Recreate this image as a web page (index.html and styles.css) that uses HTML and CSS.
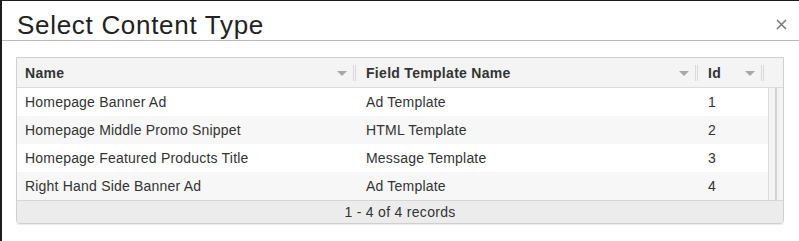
FILE: index.html
```html
<!DOCTYPE html>
<html lang="en">
<head>
    <meta charset="UTF-8">
    <title>Select Content Type</title>
    <link rel="stylesheet" href="styles.css">
</head>
<body>

    <div class="modal">
        <!-- Title bar -->
        <div class="modal-header">
            <h1>Select Content Type</h1>
            <button class="close" title="Close">
                <svg width="11" height="11" viewBox="0 0 11 11"><path d="M1 1 L10 10 M10 1 L1 10" stroke="#7a7a7a" stroke-width="1.6" fill="none"/></svg>
            </button>
        </div>

        <div class="modal-body">
            <div class="grid">
                <div class="grid-head">
                    <div class="th col-name"><span>Name</span><i class="arrow"></i><i class="sep"></i></div>
                    <div class="th col-tpl"><span>Field Template Name</span><i class="arrow"></i><i class="sep"></i></div>
                    <div class="th col-id"><span>Id</span><i class="arrow"></i><i class="sep"></i></div>
                </div>
                <div class="grid-content">
                    <div class="rows">
                        <div class="row">
                            <div class="td col-name">Homepage Banner Ad</div>
                            <div class="td col-tpl">Ad Template</div>
                            <div class="td col-id">1</div>
                        </div>
                        <div class="row alt">
                            <div class="td col-name">Homepage Middle Promo Snippet</div>
                            <div class="td col-tpl">HTML Template</div>
                            <div class="td col-id">2</div>
                        </div>
                        <div class="row">
                            <div class="td col-name">Homepage Featured Products Title</div>
                            <div class="td col-tpl">Message Template</div>
                            <div class="td col-id">3</div>
                        </div>
                        <div class="row alt">
                            <div class="td col-name">Right Hand Side Banner Ad</div>
                            <div class="td col-tpl">Ad Template</div>
                            <div class="td col-id">4</div>
                        </div>
                    </div>
                    <div class="scrollbar"><div class="thumb"></div></div>
                </div>
                <div class="grid-pager">1 - 4 of 4 records</div>
            </div>
        </div>
    </div>

</body>
</html>
```

FILE: styles.css
```css
body {
    margin: 0;
    background-color: #fff;
    font-family: "Liberation Sans", Arial, sans-serif;
    color: #333;
}
.modal {
    height: 240px;
    border-top: 1px solid #1c1c1c;
    border-left: 2px solid #1c1c1c;
    background-color: #fff;
}
.modal-header {
    height: 39px;
    padding-left: 15px;
    border-bottom: 1px solid #bbb;
    display: flex;
    align-items: center;
    justify-content: space-between;
}
h1 {
    margin: 0;
    font-size: 26px;
    font-weight: normal;
    color: #222;
    letter-spacing: 0.7px;
    line-height: 30px;
    padding-top: 8px;
}
.close {
    border: none;
    background: none;
    padding: 0;
    margin-right: 12px;
    margin-top: 8px;
    width: 11px;
    height: 11px;
    cursor: pointer;
}
.close svg {
    display: block;
}
.modal-body {
    padding: 16px 15px 0 14px;
}
.grid {
    border: 1px solid #cfcfcf;
    border-radius: 0 0 4px 4px;
    box-shadow: 0 1px 1px rgba(0, 0, 0, 0.08);
    overflow: hidden;
}
.grid-head {
    display: flex;
    height: 29px;
    background-color: #f4f4f4;
    border-bottom: 1px solid #dcdcdc;
}
.th {
    display: flex;
    align-items: center;
    box-sizing: border-box;
    padding-left: 8px;
    padding-right: 2px;
    font-size: 14px;
    font-weight: bold;
    letter-spacing: 0.3px;
    color: #333;
}
.th span {
    flex: 1;
}
.arrow {
    width: 0;
    height: 0;
    border-left: 5px solid transparent;
    border-right: 5px solid transparent;
    border-top: 5px solid #a8a8a8;
    margin-right: 6px;
    margin-top: 2px;
}
.sep {
    width: 1px;
    height: 16px;
    border-left: 1px solid #dadada;
    border-right: 1px solid #dadada;
}
.col-name {
    width: 341px;
}
.col-tpl {
    width: 342px;
}
.grid-head .col-id {
    width: 66px;
}
.grid-content {
    display: flex;
}
.rows {
    width: 751px;
    border-right: 1px solid #dcdcdc;
}
.row {
    display: flex;
    height: 28px;
    align-items: center;
    font-size: 14px;
    letter-spacing: 0.2px;
    color: #333;
    background-color: #fff;
}
.row.alt {
    background-color: #f7f7f7;
}
.td {
    box-sizing: border-box;
    padding-left: 8px;
}
.row .col-id {
    flex: 1;
}
.scrollbar {
    flex: 1;
    background-color: #f4f4f4;
}
.thumb {
    width: 2px;
    height: 100%;
    margin-left: 6px;
    background-color: #d2d2d2;
}
.grid-pager {
    height: 22px;
    line-height: 22px;
    border-top: 1px solid #d6d6d6;
    background-color: #ececec;
    text-align: center;
    font-size: 14px;
    letter-spacing: 0.3px;
    color: #333;
}
```
